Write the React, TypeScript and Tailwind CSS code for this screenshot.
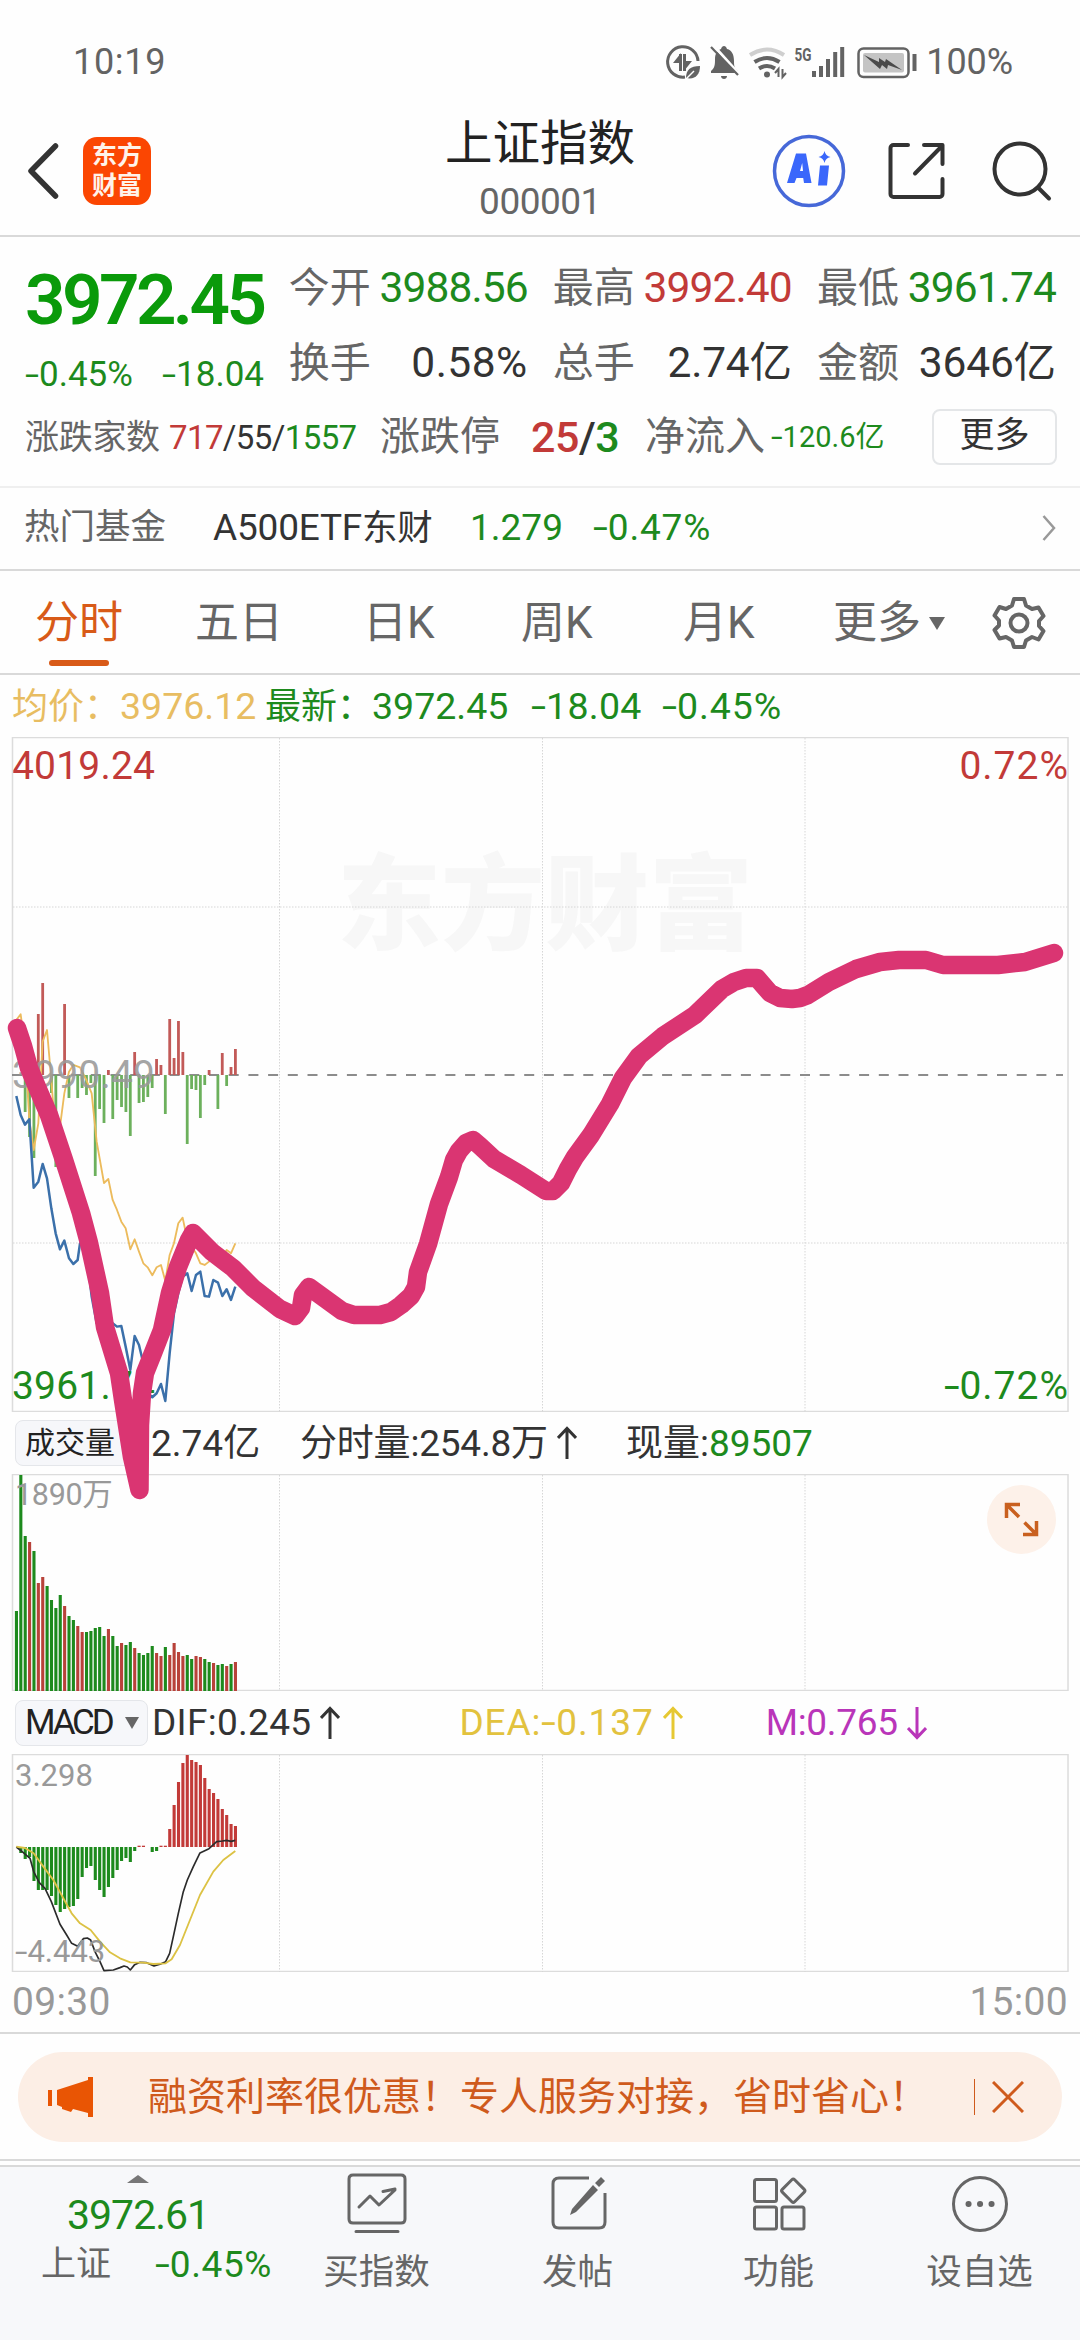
import React from "react";

const UP = "#c23a38";
const DOWN = "#1d8a1d";

// x of the n-th minute inside a chart panel
const STEP = 4.38;
const minuteX = (i: number) => 16.4 + i * STEP;

// positive = above the zero line
const flowBars = [
    0, 0, -37, -62, -83, 61, 92, 0, -18, -92, 0, 71, -23, 0, -23, -13, -20, -8, -101, -34, -48, 5, -44, -25, -32, -37,
    -61, 23, -28, -27, -22, -13, 16, 10, -39, 56, 17, 54, 23, -69, -14, -15, -43, -10, 5, 0, -34, 22, -11, 8, 26,
];

const volumes: [number, string][] = [
    [80, "g"], [216, "g"], [155, "g"], [149, "r"], [140, "g"], [108, "r"], [114, "r"], [105, "g"], [91, "g"], [83, "g"],
    [96, "g"], [85, "r"], [75, "g"], [71, "g"], [65, "r"], [59, "r"], [59, "g"], [60, "g"], [63, "g"], [64, "g"],
    [55, "g"], [62, "r"], [55, "g"], [45, "g"], [48, "r"], [46, "g"], [49, "g"], [43, "r"], [38, "g"], [36, "g"],
    [38, "g"], [45, "g"], [38, "r"], [35, "r"], [44, "g"], [36, "r"], [48, "r"], [39, "r"], [35, "r"], [36, "g"],
    [32, "g"], [35, "r"], [34, "r"], [32, "g"], [29, "g"], [28, "r"], [26, "g"], [27, "g"], [25, "r"], [27, "g"],
    [29, "r"],
];

const macdBars = [
    0, -6, -12, -10, -34, -43, -43, -43, -49, -58, -65, -62, -60, -59, -52, -30, -21, -19, -33, -43, -50, -40, -31, -23,
    -14, -11, -15, -4, 1.3, 1.3, 0, -5, -4, 1.3, 1.3, 18, 42, 65, 84, 92, 87, 85, 82, 69, 58, 54, 48, 38, 32, 23, 21,
];

const priceLine =
    "49,408 62,465 75,494 88,478 101,683 115,665 128,612 141,655 154,745 167,820 180,868 193,842 207,895 220,912 233,900 240,850 256,840 275,1010 290,1090 310,1105 325,1080 338,1090 351,1100 364,1098 377,1160 391,1230 404,1128 417,1155 430,1210 443,1300 457,1312 470,1300 483,1272 496,1323 509,1180 522,1060 535,1000 548,950 562,940 575,993 588,945 601,935 614,1008 627,1010 640,960 654,968 667,1008 680,988 693,1020 706,980";
const averageLine =
    "49,180 62,163 75,260 88,480 101,570 115,490 128,245 141,210 154,360 167,530 180,500 193,400 207,335 220,315 240,322 259,360 275,400 290,545 312,669 325,657 338,720 351,750 364,785 377,805 391,868 404,838 417,875 430,910 443,922 457,946 470,922 483,915 496,963 509,885 522,850 535,790 548,773 562,840 588,880 601,910 614,915 627,905 640,885 654,915 667,890 680,870 693,880 706,850";
const difLine =
    "49,471 70,488 90,505 101,545 118,578 135,595 154,635 180,703 200,735 215,760 233,769 250,746 262,744 272,750 285,785 300,815 312,842 340,840 360,833 372,828 382,831 391,840 404,824 420,817 440,818 462,828 480,823 497,815 509,790 520,740 535,670 550,605 562,570 580,530 600,489 627,476 650,455 667,453 680,451 693,454 706,451";
const deaLine =
    "49,470 75,474 101,490 130,530 160,570 190,625 215,670 240,700 272,720 300,755 330,787 360,805 391,817 430,818 460,822 497,820 515,808 540,765 570,690 600,615 640,545 670,510 706,483";

// hand-drawn marker, page coordinates
const marker =
    "17,1028 23,1046 29,1068 40,1094 49,1115 64,1160 81,1213 89,1243 100,1293 105,1327 119,1373 123,1400 132,1457 139.5,1490 140,1425 142,1393 145,1373 153,1353 162,1330 170,1293 178,1267 189,1240 193,1233 212,1252 233,1268 253,1288 280,1309 295,1316 301,1308 303,1295 309,1287 331,1303 342,1311 354,1315 380,1315 391,1312 401,1305 411,1296 416,1287 418,1272 428,1244 439,1204 449,1177 454,1160 459,1151 466,1143 473,1140 480,1146 494,1159 521,1175 546,1191 553,1191 561,1183 568,1169 575,1157 591,1135 610,1104 623,1078 639,1056 663,1036 695,1015 722,989 734,982 746,978 757,978 763,985 770,993 780,998 792,999 800,998 808,995 829,982 856,969 880,962 899,960 926,960 943,965 998,965 1025,962 1054,953";

// negative figure with a wide minus sign
const Neg = ({ children }: { children: React.ReactNode }) => (
    <span>
        <span className="inline-block w-[0.400em] origin-left scale-x-145">-</span>
        {children}
    </span>
);

const Grid = ({ h }: { h: number }) => (
    <g fill="none" stroke="#dcdcdc">
        <rect x="12.5" y="0.5" width="1055.5" height={h - 1} strokeWidth="1.5" />
        <g strokeDasharray="1.5 1.5" stroke="#d6d6d6">
            <path d={`M279.5 1V${h}M542.5 1V${h}M805 1V${h}`} />
        </g>
    </g>
);

const StatusIcons = () => (
    <svg width="256" height="40" viewBox="662 41 256 40" fill="none" stroke="#636363">
        {/* data saver */}
        <path d="M697 60A15.2 15.2 0 1 0 684 76" strokeWidth="3" />
        <path d="M679.5 53v17M683.5 53v17" strokeWidth="3" />
        <path d="M680 52v10h-8zM683 70V60h8z" fill="#636363" stroke="none" />
        <path d="M685 77c0-8 4-12 14-12 0 9-5 14-14 12z" fill="#636363" stroke="none" />
        <path d="M684 79l9-9" stroke="#fff" strokeWidth="1.5" />
        {/* bell off */}
        <path d="M710 72v-2c4-3 4-7 4-12 0-6 3-9 6-10 1-4 5-4 6 0 5 1 7 6 7 12 0 4 0 7 4 10v2z" fill="#636363" stroke="none" />
        <path d="M720 75h6c0 4-6 4-6 0z" fill="#636363" stroke="none" />
        <path d="M712 44l26 29" stroke="#fff" strokeWidth="3" />
        <path d="M710 46l27 28" strokeWidth="2.2" />
        {/* wifi */}
        <g strokeWidth="4">
            <path d="M749 54q17-11 34 0" stroke="#cfcfcf" />
            <path d="M753.500 61q12.500-8 25 0" />
            <path d="M758 67.500q8-5 16 0" />
        </g>
        <circle cx="766" cy="73.500" r="3" fill="#636363" stroke="none" />
        <path d="M777.500 76v-8l-3.500 4M781.500 68v8l3.500-4" strokeWidth="2" />
        <text x="793.500" y="59.500" fill="#636363" stroke="none" className="font-[Roboto] text-[18px] font-bold" textLength="17" lengthAdjust="spacingAndGlyphs">5G</text>
        <path d="M813 70v6M820 65v11M827 58v18M834.200 51v25M841.200 46v30" strokeWidth="4" />
        {/* battery */}
        <rect x="857.500" y="47.500" width="50" height="28.500" rx="5" strokeWidth="2.500" />
        <rect x="862" y="52" width="41" height="19.500" rx="2" fill="#c4c4c4" stroke="none" />
        <path d="M863 54l15 7v-4l6 4 1-3 16 11-14-5-1 4-5-4-2 4z" fill="#4a4a4a" stroke="none" />
        <path d="M913.500 53v17" strokeWidth="4" />
    </svg>
);

const StatusBar = () => (
    <div className="flex h-[123px] items-center justify-between pr-[67px] pl-[73px] text-[36px] text-[#636363]">
        <span className="tracking-[0.7px]">10:19</span>
        <div className="flex items-center gap-[7px]">
            <StatusIcons />
            <span className="tracking-[-0.1px]">100%</span>
        </div>
    </div>
);

const Header = () => (
    <header className="grid h-[114px] grid-cols-[1fr_auto_1fr] items-center border-b-2 border-[#d9d9d9] pb-[18px]">
        <div className="flex items-center gap-[24px] pl-[26px]">
            <svg width="33" height="60" viewBox="0 0 33 60" fill="none" stroke="#333" strokeWidth="5.500" strokeLinecap="round" strokeLinejoin="round">
                <path d="M29.500 5L5 30l24.500 25" />
            </svg>
            <div className="flex h-[68px] w-[68px] flex-col items-center justify-center gap-[4px] rounded-[14px] bg-[#fb4602] text-[25px] leading-[26px] font-bold text-[#fff3ea]">
                <span>东方</span>
                <span>财富</span>
            </div>
        </div>
        <div className="flex flex-col items-center">
            <h1 className="text-[47.500px] leading-[42px] font-normal text-[#222]">上证指数</h1>
            <span className="mt-[20px] text-[37px] leading-[33px] tracking-[-0.500px] text-[#666]">000001</span>
        </div>
        <div className="flex items-center justify-end pr-[26px]">
            <svg width="74" height="74" viewBox="0 0 74 74" fill="none">
                <circle cx="37" cy="37" r="34.500" stroke="#4668d8" strokeWidth="3.500" />
                <path d="M24 20.500h10l5.500 29.500h-7.500l-.8-5h-6.700l-2 5h-7.500zM28 38h3l-.8-8z" fill="#3a67fb" fillRule="evenodd" transform="translate(0 -1)" />
                <path d="M48 31.500h9l-2 20h-9zM52.500 17q1 5 6 6-5 1-6 6-1-5-6-6 5-1 6-6z" fill="#3a67fb" />
            </svg>
            <svg className="ml-[40px]" width="62" height="62" viewBox="0 0 62 62" fill="none" stroke="#333" strokeWidth="4" strokeLinecap="round" strokeLinejoin="round">
                <path d="M22 5H7.500a3 3 0 0 0-3 3v46a3 3 0 0 0 3 3h46a3 3 0 0 0 3-3V39M38 5h18.500v19M55 7L29 33.500" />
            </svg>
            <svg className="ml-[42px]" width="64" height="64" viewBox="0 0 64 64" fill="none" stroke="#333" strokeWidth="4" strokeLinecap="round">
                <circle cx="30" cy="30" r="25.500" />
                <path d="M48.500 49l10.500 10.500" />
            </svg>
        </div>
    </header>
);

const stats = [
    { label: "今开", value: "3988.56", color: "text-[#1d8a1d] tracking-[-0.900px]" },
    { label: "最高", value: "3992.40", color: "text-[#c23a38] tracking-[-0.900px]" },
    { label: "最低", value: "3961.74", color: "text-[#1d8a1d] tracking-[-0.900px]" },
    { label: "换手", value: "0.58%", color: "text-[#333] tracking-[0.500px]" },
    { label: "总手", value: "2.74亿", color: "text-[#333] -tracking-[0.200px]" },
    { label: "金额", value: "3646亿", color: "text-[#333] -tracking-[0.200px]" },
];

const Quote = () => (
    <section className="h-[251px] border-b-2 border-[#efefef] px-[25px] pt-[14px]">
        <div className="flex">
            <div className="w-[264px]">
                <div className="h-[98px] text-[71px] leading-[98px] font-semibold tracking-[-3.600px] text-[#0a9a0a]">3972.45</div>
                <div className="flex h-[52px] w-[239px] justify-between text-[35px] leading-[52px] text-[#1d8a1d]">
                    <Neg>0.45%</Neg>
                    <Neg>18.04</Neg>
                </div>
            </div>
            <div className="grid w-[767px] grid-cols-3 gap-x-[26px]">
                {stats.map((s) => (
                    <div key={s.label} className="flex h-[75px] w-[239px] items-center justify-between leading-none">
                        <span className="text-[41px] text-[#666]">{s.label}</span>
                        <span className={`text-[42.500px] ${s.color}`}>{s.value}</span>
                    </div>
                ))}
            </div>
        </div>
        <div className="mt-[11px] flex h-[50px] items-center leading-none whitespace-nowrap">
            <span className="w-[144px] text-[34px] tracking-[-0.300px] text-[#666]">涨跌家数</span>
            <span className="w-[211px] text-[33px] tracking-[-0.600px] text-[#333]">
                <span className="text-[#c23a38]">717</span>/55/<span className="text-[#1d8a1d]">1557</span>
            </span>
            <span className="w-[151px] text-[40px] text-[#666]">涨跌停</span>
            <span className="w-[114px] text-[43px] font-medium tracking-[-0.500px] text-[#333]">
                <span className="text-[#c23a38]">25</span>/<span className="text-[#1d8a1d]">3</span>
            </span>
            <span className="w-[126px] text-[40px] text-[#666]">净流入</span>
            <span className="text-[29px] text-[#1d8a1d]"><Neg>120.6亿</Neg></span>
            <button className="-mr-[2px] ml-auto flex h-[56px] w-[125px] items-center justify-center rounded-[8px] border-2 border-[#e4e6e8] pb-[4px] text-[35px] text-[#333]">更多</button>
        </div>
    </section>
);

const FundRow = () => (
    <div className="flex h-[83px] items-center border-b-2 border-[#d9d9d9] px-[24px] pb-[2px] text-[37px] leading-none whitespace-nowrap">
        <span className="w-[189px] text-[35.500px] text-[#666]">热门基金</span>
        <span className="w-[257px] tracking-[-0.200px] text-[#333]">A500ETF<span className="text-[35.500px]">东财</span></span>
        <span className="w-[123px] text-[#1d8a1d]">1.279</span>
        <span className="tracking-[0.800px] text-[#1d8a1d]"><Neg>0.47%</Neg></span>
        <svg className="ml-auto" width="14" height="28" viewBox="0 0 14 28" fill="none" stroke="#999" strokeWidth="2.500">
            <path d="M1.500 2L12 14 1.500 26" />
        </svg>
    </div>
);

const Tabs = () => (
    <nav className="flex h-[104px] items-center border-b-2 border-[#d9d9d9] pt-[2px] pl-[35px] text-[44px] leading-none whitespace-nowrap text-[#666]">
        <div className="relative w-[160px] text-[#d85a18]">
            分时
            <i className="absolute top-[59px] left-[14px] h-[6px] w-[60px] rounded-full bg-[#d85a18]" />
        </div>
        <div className="w-[168px]">五日</div>
        <div className="w-[158px]">日K</div>
        <div className="w-[162px]">周K</div>
        <div className="w-[150px]">月K</div>
        <div className="flex w-[159px] items-center gap-[8px]">
            更多
            <svg width="16" height="13" viewBox="0 0 16 13"><path d="M0 0h16L8 13z" fill="#666" /></svg>
        </div>
        <svg width="54" height="54" viewBox="0 0 54 54" fill="none" stroke="#666" strokeWidth="4" strokeLinejoin="round">
            <path d="M22 3h10l2 6.500 6 3.500 6.500-1.500 5 8.500-4.500 5v5l4.500 5-5 8.500L40 41l-6 3.500-2 6.500H22l-2-6.500-6-3.500-6.500 1.500-5-8.500L7 29.500v-5l-4.500-5 5-8.500L14 13l6-3.500z" />
            <circle cx="27" cy="27" r="8.500" />
        </svg>
    </nav>
);

const PriceChart = () => (
    <section>
        <div className="flex h-[62px] items-center pt-[1px] pl-[12px] text-[37.500px] leading-none whitespace-nowrap text-[#1d8a1d]">
            <span className="w-[108px] text-[36px] text-[#e8bd62]">均价：</span>
            <span className="w-[145px] text-[#e8bd62]">3976.12</span>
            <span className="w-[107px] text-[36px]">最新：</span>
            <span className="w-[159px]">3972.45</span>
            <span className="w-[131px] tracking-[0.300px]"><Neg>18.04</Neg></span>
            <span className="tracking-[0.900px]"><Neg>0.45%</Neg></span>
        </div>
        <div className="relative h-[675px] text-[39px] leading-none tracking-[0.200px]">
            <div className="absolute top-[112px] left-[337px] text-[104px] leading-[116px] font-black tracking-normal text-[#f7f7f7]">东方财富</div>
            <span className="absolute top-[10px] left-[12px] text-[#c23a38]">4019.24</span>
            <span className="absolute top-[10px] right-[11px] tracking-[1px] text-[#c23a38]">0.72%</span>
            <span className="absolute top-[630px] left-[12px] text-[#1d8a1d]">3961.74</span>
            <span className="absolute top-[630px] right-[11px] tracking-[1px] text-[#1d8a1d]"><Neg>0.72%</Neg></span>
            <svg className="absolute inset-0" width="1080" height="675" viewBox="0 0 1080 675" fill="none">
                <Grid h={675} />
                <path d="M13 170H1068M13 506H1068" stroke="#d6d6d6" strokeDasharray="1.500 1.500" />
                <path d="M12 338H1063" stroke="#8c8c8c" strokeWidth="2" strokeDasharray="10 9.700" />
                {flowBars.map((v, i) =>
                    v === 0 ? null : (
                        <rect key={i} x={minuteX(i) - 1.4} y={v > 0 ? 338 - v : 338} width="2.800" height={Math.abs(v)} fill={v > 0 ? "#c25a58" : "#6cb05c"} />
                    ),
                )}
                <g transform="translate(0 223) scale(0.3333)" strokeLinejoin="round">
                    <polyline points={averageLine} stroke="#ecbb5c" strokeWidth="5.500" />
                    <polyline points={priceLine} stroke="#3b70aa" strokeWidth="7.500" />
                </g>
            </svg>
            <span className="absolute top-[319px] left-[12px] text-[#999]/90">3990.49</span>
        </div>
    </section>
);

const Arrow = ({ down, color, className }: { down?: boolean; color: string; className?: string }) => (
    <svg className={`${className ?? ""} ${down ? "rotate-180" : ""}`} width="20" height="34" viewBox="0 0 20 34" fill="none" stroke={color} strokeWidth="3">
        <path d="M10 33V3M1 12l9-9.500 9 9.500" />
    </svg>
);

const Chip = ({ label, className }: { label: string; className: string }) => (
    <div className={`flex h-[46px] items-center rounded-[8px] border border-[#e4e6ea] bg-[#f6f7fa] pl-[9px] text-[#222] ${className}`}>
        {label}
        <svg className="ml-auto" width="14" height="12" viewBox="0 0 14 12"><path d="M0 0h14L7 12z" fill="#666" /></svg>
    </div>
);

const VolumeChart = () => (
    <section>
        <div className="flex h-[62px] items-center pl-[15px] text-[37px] leading-none whitespace-nowrap text-[#333]">
            <Chip label="成交量" className="w-[133px] pr-[8px] text-[30px]" />
            <span className="ml-[3px] w-[149px]">2.74亿</span>
            <span className="tracking-[-0.200px]">分时量:254.8万</span>
            <Arrow color="#333" className="ml-[9px]" />
            <span className="ml-[49px]">现量:</span>
            <span className="text-[#1d8a1d]">89507</span>
        </div>
        <div className="relative h-[217px]">
            <svg width="1080" height="217" viewBox="0 0 1080 217" fill="none">
                <Grid h={217} />
                {volumes.map(([v, c], i) => (
                    <rect key={i} x={minuteX(i) - 1.5} y={217 - v} width="3.100" height={v} fill={c === "r" ? "#b8423a" : DOWN} />
                ))}
            </svg>
            <span className="absolute top-[6px] left-[15px] text-[30.500px] leading-none tracking-[-0.300px] text-[#999]">1890万</span>
            <div className="absolute top-[11px] right-[24px] flex h-[69px] w-[69px] items-center justify-center rounded-full bg-[#fdf1e9]">
                <svg width="35" height="35" viewBox="0 0 35 35" fill="none" stroke="#c9601f" strokeWidth="3.500">
                    <path d="M16 2.500H2.500V16M2.500 2.500L15 15M19 32.500h13.500V19M32.500 32.500L20.500 20.500" />
                </svg>
            </div>
        </div>
    </section>
);

const MacdChart = () => (
    <section>
        <div className="flex h-[63px] items-center pl-[15px] text-[37px] leading-none whitespace-nowrap text-[#333]">
            <Chip label="MACD" className="w-[133px] pr-[8px] text-[35px] tracking-[-3.200px]" />
            <span className="ml-[4px] tracking-[0.300px]">DIF:0.245</span>
            <Arrow color="#333" className="ml-[9px]" />
            <span className="ml-[119px] tracking-[0.900px] text-[#e2c23e]">DEA:<Neg>0.137</Neg></span>
            <Arrow color="#e6c832" className="ml-[9px]" />
            <span className="ml-[83px] tracking-[-0.300px] text-[#b935b9]">M:0.765</span>
            <Arrow down color="#b935b9" className="ml-[9px]" />
        </div>
        <div className="relative h-[218px] text-[31px] leading-none text-[#999]">
            <svg width="1080" height="218" viewBox="0 0 1080 218" fill="none">
                <Grid h={218} />
                {macdBars.map((v, i) =>
                    v === 0 ? null : (
                        <rect key={i} x={minuteX(i) - 1.5} y={v > 0 ? 93 - v : 93} width="3.100" height={Math.abs(v)} fill={v > 0 ? UP : DOWN} />
                    ),
                )}
                <g transform="translate(0 -64) scale(0.3333)" strokeLinejoin="round">
                    <polyline points={difLine} stroke="#2b2b2b" strokeWidth="5" />
                    <polyline points={deaLine} stroke="#dcc244" strokeWidth="5.500" />
                </g>
            </svg>
            <span className="absolute top-[6px] left-[15px]">3.298</span>
            <span className="absolute top-[182px] left-[15px]"><Neg>4.443</Neg></span>
        </div>
        <div className="flex h-[62px] items-center justify-between border-b-2 border-[#d9d9d9] px-[12px] text-[39px] leading-none text-[#999]">
            <span className="tracking-[0.300px]">09:30</span>
            <span className="tracking-[0.300px]">15:00</span>
        </div>
    </section>
);

const Banner = () => (
    <div className="h-[127px] border-b-2 border-[#d9d9d9] px-[18px] pt-[18px]">
        <div className="flex h-[90px] items-center rounded-full bg-[#fceee5] pl-[29px] leading-none whitespace-nowrap text-[#cf5a1c]">
            <svg width="48" height="42" viewBox="0 0 48 42" fill="#e95504">
                <path d="M1 14h4v16H1zM10 14L41 4V1h5v40h-5v-4l-15-4-2 3-9-3v-2l-5-2z" />
            </svg>
            <span className="ml-[53px] text-[39px]">融资利率很优惠！专人服务对接，省时省心！</span>
            <i className="ml-[46px] h-[36px] w-[1px] bg-[#cf5a1c]" />
            <svg className="ml-[17px]" width="32" height="32" viewBox="0 0 32 32" stroke="#cf5a1c" strokeWidth="3">
                <path d="M1 1l30 30M31 1L1 31" />
            </svg>
        </div>
    </div>
);

const navItems = [
    {
        label: "买指数",
        icon: <path d="M6 2h48q4 0 4 4v40q0 4-4 4H6q-4 0-4-4V6q0-4 4-4zM9 58.500h42M12 34l11-11 9 9 16-15M36 18.500L48 16" />,
    },
    {
        label: "发帖",
        icon: (
            <g>
                <path d="M41 5H11q-6 0-6 6v38q0 6 6 6h40q6 0 6-6V20" strokeLinecap="butt" />
                <path d="M45 12l5 5-22 22-6 3 2-6zM47 10l6-6 4 4-6 6z" fill="#666" stroke="none" />
            </g>
        ),
    },
    {
        label: "功能",
        icon: (
            <g>
                <rect x="5.500" y="6.500" width="22" height="22" rx="2" />
                <rect x="5.500" y="34" width="22" height="22" rx="2" />
                <rect x="33" y="34" width="22" height="22" rx="2" />
                <rect x="35.500" y="9" width="17.500" height="17.500" rx="2" transform="rotate(45 44.250 17.750)" />
            </g>
        ),
    },
    {
        label: "设自选",
        icon: (
            <g>
                <circle cx="30" cy="31" r="26.500" />
                <path d="M18.500 31h0.100M30 31h0.100M41.500 31h0.100" strokeWidth="6" />
            </g>
        ),
    },
];

const BottomNav = () => (
    <footer className="mt-[4px] h-[176px] border-t-2 border-[#d9d9d9] bg-[#f7f8fa]">
        <div className="flex">
            <div className="w-[276px] leading-none text-[#1d8a1d]">
                <svg className="mt-[8px] ml-[127px] block" width="22" height="8" viewBox="0 0 22 8"><path d="M0 8L11 0l11 8z" fill="#777" /></svg>
                <div className="mt-[10px] pl-[67px] text-[41px] leading-[44px] tracking-[-1px]">3972.61</div>
                <div className="mt-[5px] flex h-[44px] items-center pl-[41px]">
                    <span className="w-[114px] text-[35px] text-[#666]">上证</span>
                    <span className="text-[37px] tracking-[0.600px]"><Neg>0.45%</Neg></span>
                </div>
            </div>
            {navItems.map((n) => (
                <div key={n.label} className="flex w-[201px] flex-col items-center pt-[6px] text-[35.500px] leading-none text-[#666]">
                    <svg width="60" height="62" viewBox="0 0 60 62" fill="none" stroke="#666" strokeWidth="3" strokeLinecap="round" strokeLinejoin="round">
                        {n.icon}
                    </svg>
                    <span className="mt-[20px]">{n.label}</span>
                </div>
            ))}
        </div>
    </footer>
);

export default function App() {
    return (
        <div className="relative h-[2340px] w-[1080px] overflow-hidden bg-[#fefefe] font-[Roboto,'Noto_Sans_CJK_SC',sans-serif]">
            <StatusBar />
            <Header />
            <Quote />
            <FundRow />
            <Tabs />
            <PriceChart />
            <VolumeChart />
            <MacdChart />
            <Banner />
            <BottomNav />
            <svg className="pointer-events-none absolute top-0 left-0" width="1080" height="1600" viewBox="0 0 1080 1600" fill="none">
                <polyline points={marker} stroke="#da3572" strokeWidth="18.500" strokeLinecap="round" strokeLinejoin="round" />
            </svg>
        </div>
    );
}
